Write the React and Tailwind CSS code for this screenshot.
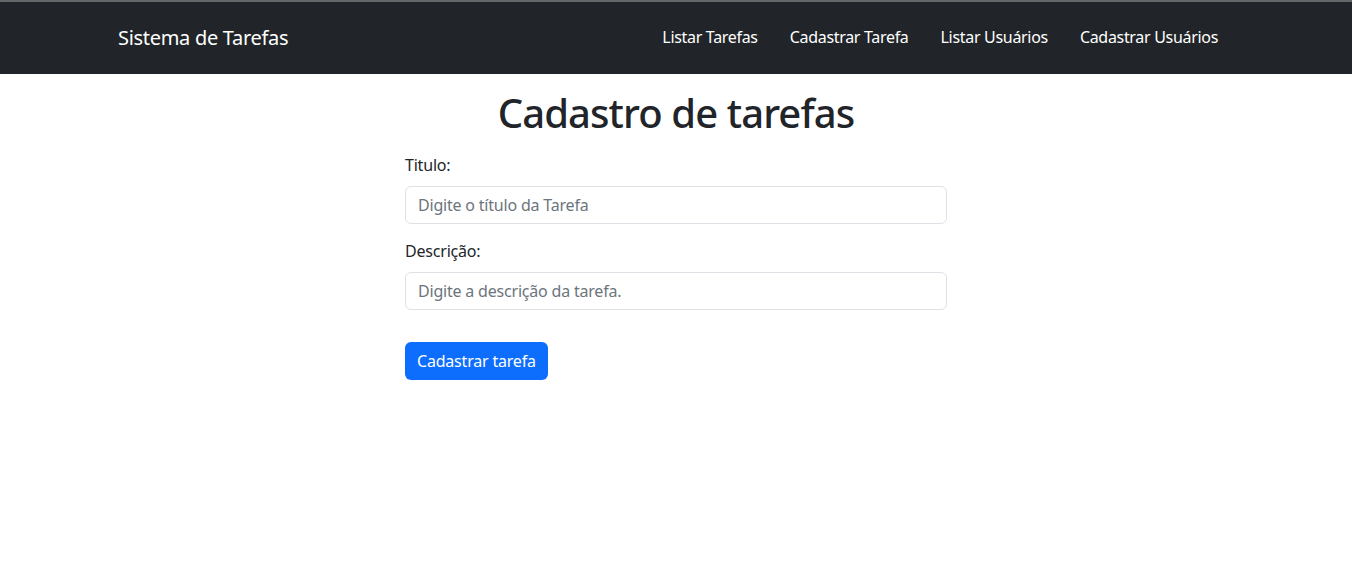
export default function App() {
  return (
    <div className="min-h-[588px] bg-white text-[#212529] tracking-[-0.2px]" style={{ fontFamily: '"Noto Sans", "Open Sans", sans-serif' }}>
      <nav className="h-[74px] bg-[#212529] border-t-2 border-[#646668]">
        <div className="mx-auto w-[1140px] px-3 h-full flex items-center justify-between">
          <span className="text-[20px] text-white pb-[1px] tracking-[-0.3px]">Sistema de Tarefas</span>
          <ul className="flex items-center gap-[16px] pr-[8px] pb-[2px] text-[16px] text-white tracking-[-0.31px]">
            <li className="px-2">Listar Tarefas</li>
            <li className="px-2">Cadastrar Tarefa</li>
            <li className="px-2">Listar Usuários</li>
            <li className="px-2">Cadastrar Usuários</li>
          </ul>
        </div>
      </nav>
      <main className="flex flex-col items-center">
        <h1 className="mt-[15px] text-[40px] leading-[48px] font-medium tracking-[-0.9px]">Cadastro de tarefas</h1>
        <form className="w-[542px] mt-[16px] flex flex-col">
          <label className="text-[16px] leading-[24px] mb-[9px]">Titulo:</label>
          <input
            className="h-[38px] px-3 border border-[#dee2e6] rounded-[6px] text-[16px] placeholder:text-[#6c757d] outline-none"
            placeholder="Digite o título da Tarefa"
          />
          <label className="mt-[15px] text-[16px] leading-[24px] mb-[9px]">Descrição:</label>
          <input
            className="h-[38px] px-3 border border-[#dee2e6] rounded-[6px] text-[16px] placeholder:text-[#6c757d] outline-none"
            placeholder="Digite a descrição da tarefa."
          />
          <div className="mt-[32px]">
            <button type="button" className="h-[38px] px-3 rounded-[6px] bg-[#0d6efd] text-white text-[16px]">
              Cadastrar tarefa
            </button>
          </div>
        </form>
      </main>
    </div>
  );
}
